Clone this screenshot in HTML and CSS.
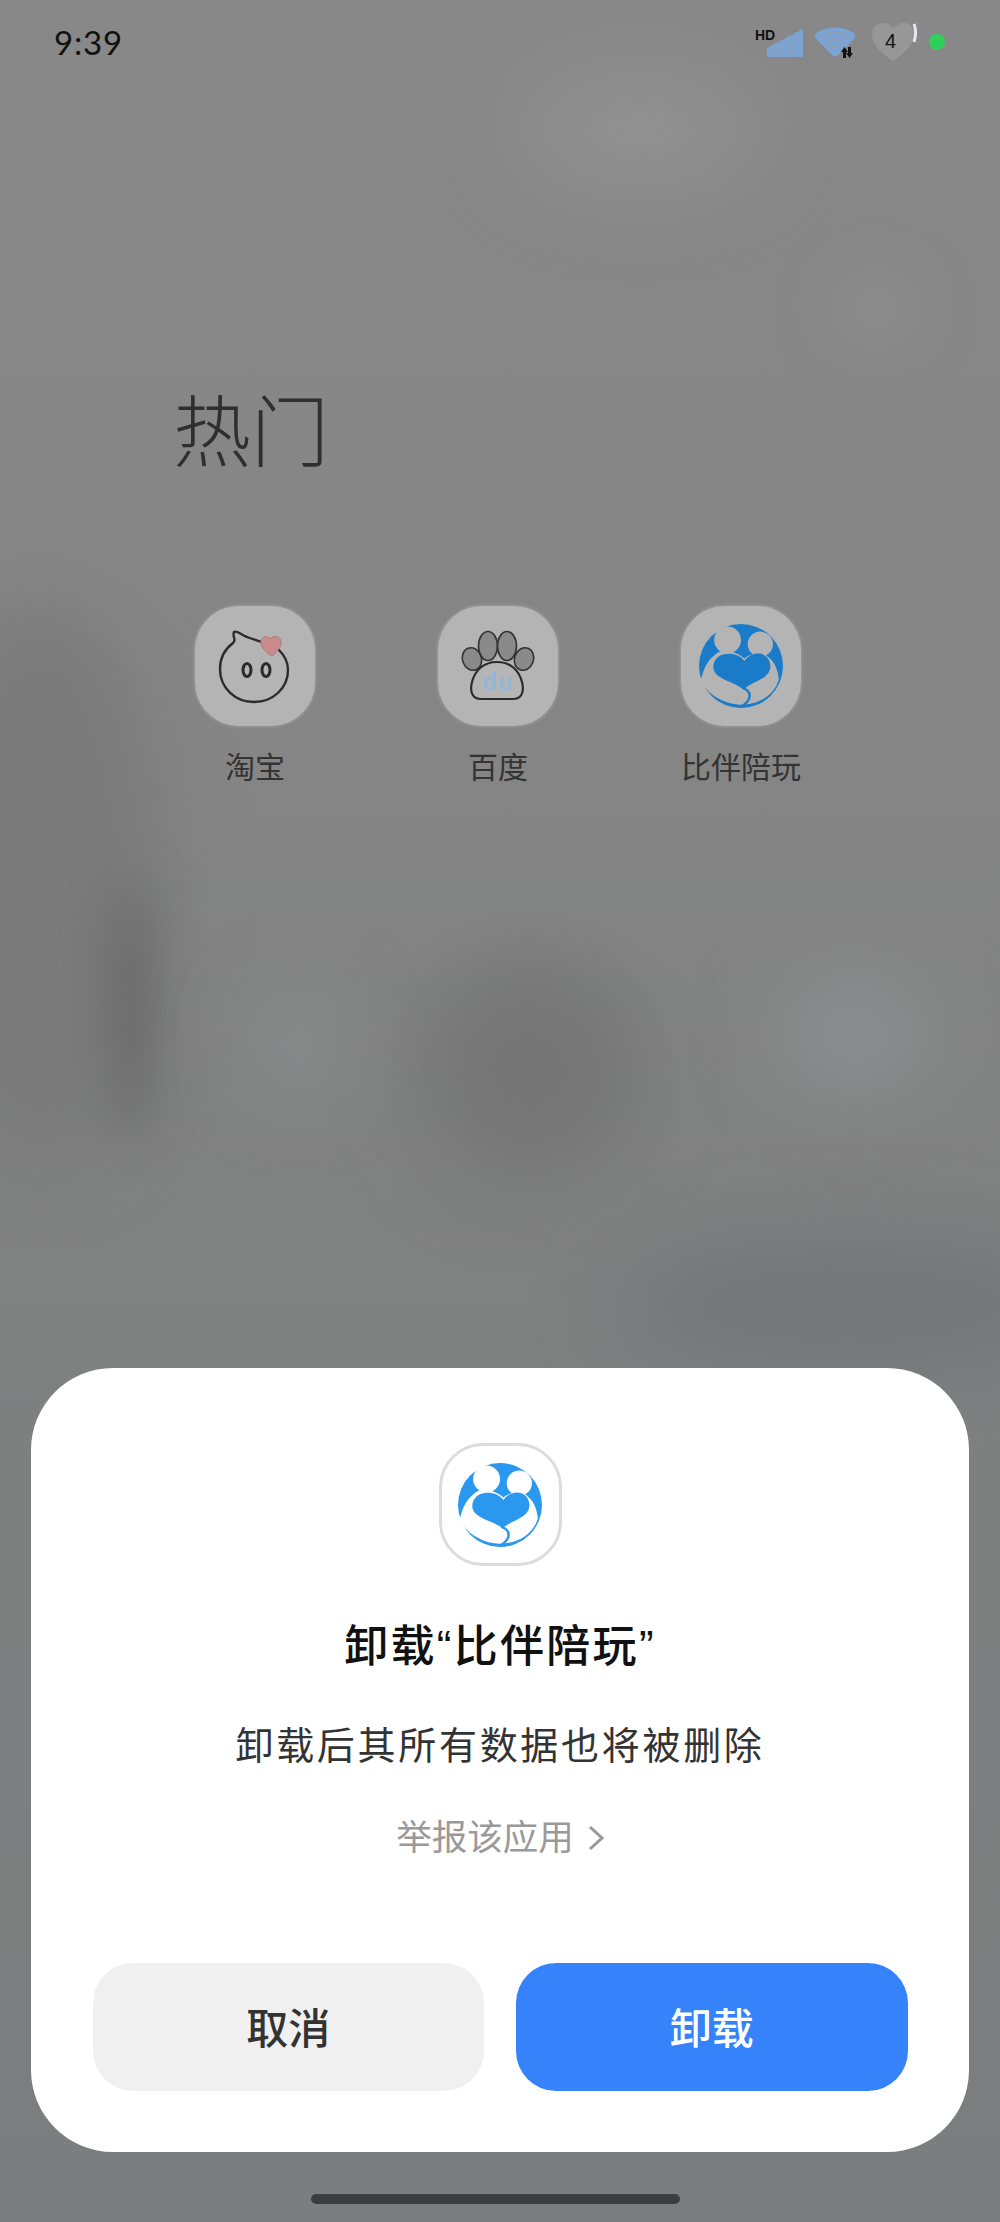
FILE: index.html
```html
<!DOCTYPE html>
<html lang="zh-CN">

<head>
  <meta charset="UTF-8">
  <meta name="viewport" content="width=device-width, initial-scale=1.0">
  <title>卸载</title>
  <link rel="stylesheet" href="styles.css">
</head>

<body>
  <svg class="defs" width="0" height="0" aria-hidden="true">
    <symbol id="companion-logo" viewBox="0 0 100 100">
      <circle cx="50" cy="50" r="50" class="logo-blue" />
      <circle cx="34" cy="19" r="16" class="logo-cut" />
      <circle cx="73" cy="24" r="15" class="logo-cut" />
      <path class="logo-cut" d="M2 68C5 52 12 40 24 33C36 30 47 35 54 41C60 36 68 34 78 36C88 42 94 52 95 66C90 84 72 96 50 96C30 96 10 84 2 68Z" />
      <path class="logo-blue" d="M54 44C44 30 16 33 17 52C18 66 42 68 53 78C63 68 85 66 85 50C84 32 63 31 54 44Z" />
      <path class="logo-stroke" d="M52 76C63 80 64 91 49 99" />
    </symbol>
  </svg>

  <div class="screen">
    <!-- blurred wallpaper behind the folder -->
    <div class="wallpaper">
      <span class="blob blob-side"></span>
      <span class="blob blob-streak"></span>
      <span class="blob blob-dark"></span>
      <span class="blob blob-light-top"></span>
      <span class="blob blob-light-paw"></span>
      <span class="blob blob-light-left"></span>
      <span class="blob blob-light-right"></span>
      <span class="blob blob-shade"></span>
    </div>

    <!-- Status bar -->
    <div class="status-bar">
      <span class="clock">9:39</span>
      <div class="status-icons">
        <div class="signal">
          <span class="hd">HD</span>
          <svg width="36" height="28" viewBox="0 0 36 28">
            <path d="M0 28V19L36 0V28Z" fill="#7ba3d4" />
            <path d="M7 28V15M14 28V11M21 28V7M28 28V3" stroke="#8f9fb2" stroke-width="1.500" />
          </svg>
        </div>
        <div class="wifi">
          <svg width="40" height="30" viewBox="0 0 40 30">
            <path d="M1 12C-1 9 0 7 3 5C13 -1 27 -1 37 5C40 7 41 9 39 12L23 28C21 30 19 30 17 28Z" fill="#7ba3d4" />
            <path d="M6 10C14 4 26 4 34 10M11 16C16 11 24 11 29 16M15 21C18 19 22 19 25 21" stroke="#8f9fb2" stroke-width="1.800" fill="none" />
          </svg>
          <svg class="wifi-arrows" width="12" height="11" viewBox="0 0 12 11">
            <path d="M3.500 0L7 5H5V11H2V5H0Z M8.500 11L5 6H7V0H10V6H12Z" fill="#111" />
          </svg>
        </div>
        <div class="heart">
          <svg width="46" height="38" viewBox="0 0 46 38">
            <path d="M21 38C8 29 0 21 0 11C0 4 5 0 11 0C15 0 19 2 21 5C24 2 28 0 32 0C37 0 42 4 42 11C42 21 34 29 21 38Z" fill="#979797" />
            <path d="M42 1C44 6 44 13 42 19" stroke="#e4e9f0" stroke-width="3" fill="none" />
          </svg>
          <span class="heart-count">4</span>
        </div>
        <span class="dot"></span>
      </div>
    </div>

    <h1 class="folder-title">热门</h1>

    <!-- App grid -->
    <div class="app-grid">
      <div class="app">
        <div class="app-icon">
          <svg width="120" height="120" viewBox="0 0 120 120">
            <path d="M39 26C37 32 42 33 38 37C30 43 25 52 25 63C25 82 40 96 59 96C78 96 93 82 93 64C93 56 90 50 84 44C76 38 60 34 52 31C46 29 42 24 39 26Z" fill="none" stroke="#2b2b2b" stroke-width="2.400" />
            <path d="M77 50C70 46 65 40 66 35C67 30 73 29 75 33C78 29 85 30 86 35C87 41 82 46 77 50Z" fill="#c98b8b" stroke="#a87c7c" stroke-width="1" />
            <ellipse cx="52" cy="64" rx="4" ry="6.500" fill="none" stroke="#2b2b2b" stroke-width="3" />
            <ellipse cx="71" cy="64" rx="4" ry="6.500" fill="none" stroke="#2b2b2b" stroke-width="3" />
          </svg>
        </div>
        <span class="app-name">淘宝</span>
      </div>
      <div class="app">
        <div class="app-icon">
          <svg width="120" height="120" viewBox="0 0 120 120">
            <g fill="#8a8a8a" stroke="#333" stroke-width="1.600">
              <ellipse cx="34" cy="53" rx="9.500" ry="11.500" transform="rotate(-20 34 53)" />
              <ellipse cx="50" cy="40" rx="9.500" ry="14.500" />
              <ellipse cx="69" cy="40" rx="9.500" ry="14.500" />
              <ellipse cx="86" cy="53" rx="9.500" ry="11.500" transform="rotate(20 86 53)" />
            </g>
            <path d="M59 56C72 56 81 64 84 76C87 88 82 93 75 93H43C36 93 31 88 34 76C37 64 46 56 59 56Z" fill="#b5b5b5" stroke="#2b2b2b" stroke-width="2.200" />
            <text x="60" y="84" class="paw-text">du</text>
          </svg>
        </div>
        <span class="app-name">百度</span>
      </div>
      <div class="app">
        <div class="app-icon logo-dim">
          <svg width="84" height="84">
            <use href="#companion-logo" />
          </svg>
        </div>
        <span class="app-name">比伴陪玩</span>
      </div>
    </div>

    <!-- Uninstall sheet -->
    <div class="sheet">
      <div class="sheet-icon">
        <svg width="84" height="84">
          <use href="#companion-logo" />
        </svg>
      </div>
      <h2 class="sheet-title">卸载“比伴陪玩”</h2>
      <p class="sheet-text">卸载后其所有数据也将被删除</p>
      <a class="report-link" href="#">
        举报该应用
        <svg width="16" height="26" viewBox="0 0 16 26">
          <path d="M2 2L14 13L2 24" fill="none" stroke="#999" stroke-width="3" />
        </svg>
      </a>
      <div class="sheet-actions">
        <button class="btn btn-cancel" type="button">取消</button>
        <button class="btn btn-confirm" type="button">卸载</button>
      </div>
    </div>

    <div class="home-area">
      <span class="home-bar"></span>
    </div>
  </div>
</body>

</html>
```

FILE: styles.css
```css
* {
  box-sizing: border-box;
}

body {
  margin: 0;
  font-family: "Liberation Sans", "Noto Sans CJK SC", sans-serif;
  background-color: #808080;
}

.defs {
  position: absolute;
}

.screen {
  position: relative;
  display: flex;
  flex-direction: column;
  width: 1000px;
  height: 2222px;
  overflow: hidden;
  background: linear-gradient(180deg, #888888 0%, #858585 35%, #7f8080 60%, #7b7d7e 100%);
}

.screen > * {
  position: relative;
}

.screen > .wallpaper {
  position: absolute;
  inset: 0;
}

.blob {
  position: absolute;
  border-radius: 50%;
  filter: blur(40px);
}

.blob-side {
  left: -80px;
  top: 600px;
  width: 240px;
  height: 560px;
  background-color: #7a7a7a;
}

.blob-streak {
  left: 106px;
  top: 880px;
  width: 50px;
  height: 260px;
  background-color: #6c6c6c;
  filter: blur(22px);
}

.blob-dark {
  left: 420px;
  top: 960px;
  width: 220px;
  height: 220px;
  background-color: #757575;
}

.blob-light-top {
  left: 520px;
  top: 70px;
  width: 240px;
  height: 120px;
  background-color: #919191;
}

.blob-light-paw {
  left: 830px;
  top: 270px;
  width: 90px;
  height: 80px;
  background-color: #8c8c8c;
  filter: blur(24px);
}

.blob-light-left {
  left: 260px;
  top: 1000px;
  width: 80px;
  height: 90px;
  background-color: #8b8d8e;
}

.blob-light-right {
  left: 780px;
  top: 980px;
  width: 150px;
  height: 110px;
  background-color: #8d8f90;
}

.blob-shade {
  left: 620px;
  top: 1240px;
  width: 460px;
  height: 130px;
  background-color: #737578;
}

/* status bar */
.status-bar {
  display: flex;
  align-items: center;
  justify-content: space-between;
  height: 84px;
  padding: 0 54px;
  flex-shrink: 0;
}

.clock {
  font-family: Lato, sans-serif;
  font-size: 33px;
  letter-spacing: 0.800px;
  color: #111;
}

.status-icons {
  display: flex;
  align-items: center;
  margin-right: 1px;
}

.signal {
  position: relative;
  display: flex;
  padding-left: 6px;
  margin-top: 2px;
}

.hd {
  position: absolute;
  left: -6px;
  top: -2px;
  font-size: 14px;
  font-weight: 700;
  color: #111;
}

.wifi {
  position: relative;
  display: flex;
  margin-left: 12px;
}

.wifi-arrows {
  position: absolute;
  right: 2px;
  bottom: -1px;
}

.heart {
  position: relative;
  display: flex;
  margin-left: 17px;
}

.heart-count {
  position: absolute;
  left: 13px;
  top: 7px;
  font-size: 20px;
  color: #111;
}

.dot {
  width: 16px;
  height: 16px;
  margin-left: 11px;
  border-radius: 50%;
  background-color: #2fd05a;
}

/* folder */
.folder-title {
  margin: 311px 0 0;
  padding-left: 173px;
  font-size: 78px;
  font-weight: 300;
  line-height: 78px;
  color: #2f2f2f;
}

.app-grid {
  display: grid;
  grid-template-columns: repeat(3, 120px);
  gap: 123px;
  margin-top: 133px;
  padding-left: 195px;
}

.app {
  display: flex;
  flex-direction: column;
  align-items: center;
}

.app-icon {
  display: flex;
  align-items: center;
  justify-content: center;
  width: 120px;
  height: 120px;
  border-radius: 44px;
  background-color: #b4b4b4;
  box-shadow: 0 0 3px 1px #9c9c9c;
}

.app-name {
  margin-top: 22px;
  font-size: 30px;
  line-height: 40px;
  color: #333;
}

.paw-text {
  font-size: 24px;
  font-weight: 700;
  letter-spacing: 1px;
  text-anchor: middle;
  fill: #94b6d8;
}

.logo-blue {
  fill: var(--logo-blue, #2a98ee);
}

.logo-cut {
  fill: var(--logo-cut, #fff);
}

.logo-stroke {
  fill: none;
  stroke: var(--logo-blue, #2a98ee);
  stroke-width: 3;
}

.logo-dim {
  --logo-blue: #1a7cc9;
  --logo-cut: #b4b4b4;
}

/* uninstall sheet */
.sheet {
  display: flex;
  flex-direction: column;
  align-items: center;
  height: 784px;
  margin: auto 31px 0;
  padding: 75px 61.5px 0;
  border-radius: 82px;
  background-color: #fff;
}

.sheet-icon {
  display: flex;
  align-items: center;
  justify-content: center;
  width: 123px;
  height: 123px;
  border: 3px solid #dcdcdc;
  border-radius: 44px;
  background-color: #fff;
}

.sheet-title {
  margin: 51px 0 0;
  font-size: 44px;
  font-weight: 500;
  letter-spacing: 2.300px;
  line-height: 60px;
  color: #111;
}

.sheet-text {
  margin: 41px 0 0;
  font-size: 38px;
  letter-spacing: 2.700px;
  line-height: 56px;
  color: #333;
}

.report-link {
  display: flex;
  align-items: center;
  gap: 14px;
  margin-top: 40px;
  font-size: 35.500px;
  line-height: 48px;
  color: #999;
  text-decoration: none;
}

.sheet-actions {
  display: flex;
  gap: 32px;
  width: 100%;
  margin-top: 101px;
}

.btn {
  flex: 1;
  height: 128px;
  padding-bottom: 4px;
  border: none;
  border-radius: 40px;
  font-family: inherit;
  font-size: 42px;
  font-weight: 500;
}

.btn-cancel {
  background-color: #f0f0f0;
  color: #333;
}

.btn-confirm {
  background-color: #3582fb;
  color: #fff;
}

.home-area {
  display: flex;
  justify-content: center;
  height: 70px;
  padding-top: 42px;
  flex-shrink: 0;
}

.home-bar {
  width: 369px;
  height: 10px;
  margin-left: -9px;
  border-radius: 5px;
  background-color: #3c3e3e;
}
```
